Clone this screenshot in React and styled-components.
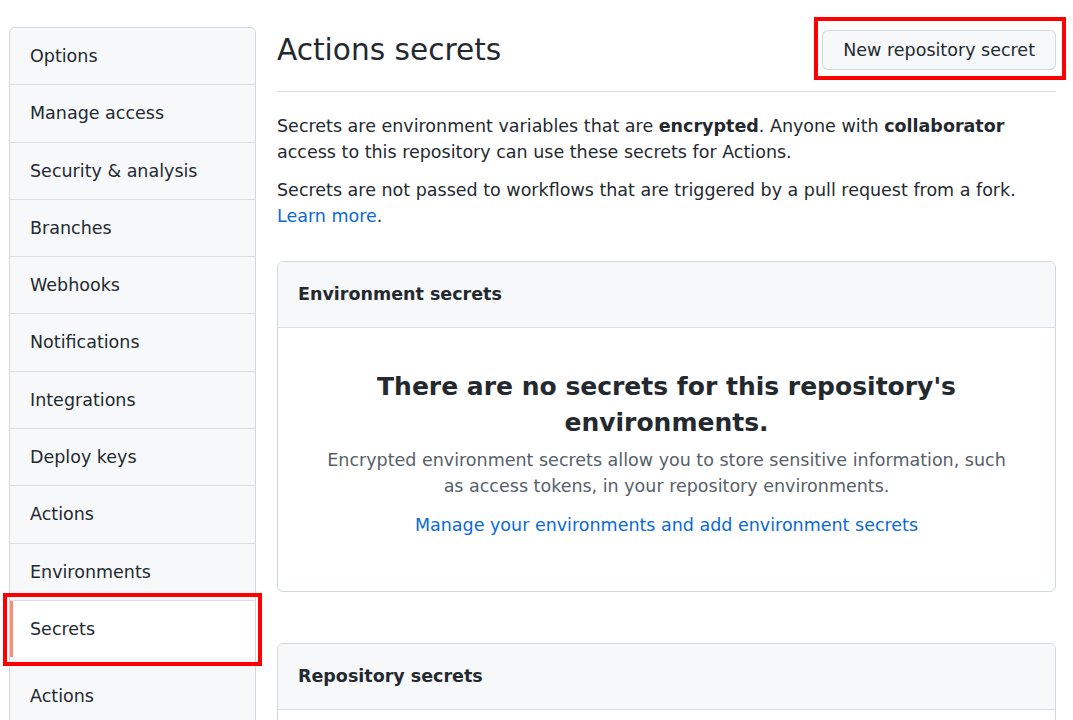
import React from 'react';
import styled, { createGlobalStyle } from 'styled-components';

const GlobalStyle = createGlobalStyle`
  html, body {
    margin: 0;
    padding: 0;
    background: #ffffff;
  }
  body {
    font-family: "DejaVu Sans", "Liberation Sans", sans-serif;
    color: #24292f;
    font-size: 17.5px;
  }
`;

const Page = styled.div`
  position: relative;
  display: flex;
  align-items: flex-start;
  gap: 21px;
  padding: 27px 17px 0 9px;
  height: 693px;
  overflow: hidden;
`;

const Sidebar = styled.nav`
  flex: 0 0 247px;
  box-sizing: border-box;
  background: #f6f8fa;
  border: 1px solid #d0d7de;
  border-radius: 6px;
  overflow: hidden;
`;

const MenuItem = styled.div`
  position: relative;
  padding: ${p => (p.$sub ? '27px 20px 16px' : '16px 20px')};
  line-height: 24.3px;
  font-size: 17.5px;
  color: #24292f;
  background: ${p => (p.$selected ? '#ffffff' : 'transparent')};
  border-top: ${p => (p.$first || p.$sub ? 'none' : '1px solid #d8dee4')};

  ${p =>
    p.$selected &&
    `
    &::before {
      content: '';
      position: absolute;
      left: 0;
      top: 0;
      bottom: 0;
      width: 3px;
      background: #fd8c73;
    }
  `}
`;

const Main = styled.main`
  flex: 1;
  min-width: 0;
`;

const Subhead = styled.div`
  display: flex;
  align-items: center;
  justify-content: space-between;
  padding: 3px 0 21px;
  border-bottom: 1px solid #d8dee4;
`;

const Title = styled.h2`
  margin: 0;
  font-size: 29.6px;
  font-weight: 400;
  line-height: 40px;
  color: #24292f;
`;

const Button = styled.button`
  height: 40px;
  padding: 0 20px;
  font-family: inherit;
  font-size: 17.5px;
  color: #24292f;
  background: #f6f8fa;
  border: 1px solid rgba(27, 31, 36, 0.15);
  border-radius: 6px;
  cursor: pointer;
`;

const Para = styled.p`
  margin: ${p => (p.$first ? '21px' : '12px')} 0 0;
  line-height: 26px;
  font-size: 17.5px;
`;

const Link = styled.a`
  color: #0969da;
  text-decoration: none;
`;

const Box = styled.section`
  margin-top: ${p => p.$top}px;
  border: 1px solid #d0d7de;
  border-radius: 6px;
  overflow: hidden;
`;

const BoxHeader = styled.div`
  padding: 20px 20px 21px;
  line-height: 24px;
  font-weight: 700;
  background: #f6f8fa;
  border-bottom: 1px solid #d8dee4;
`;

const Blankslate = styled.div`
  padding: 41px 40px 53px;
  text-align: center;
`;

const BlankTitle = styled.h3`
  margin: 0;
  font-size: 25px;
  font-weight: 700;
  line-height: 36px;
`;

const BlankText = styled.p`
  margin: 6px 0 0;
  line-height: 26px;
  color: #57606a;
`;

const BlankLink = styled.p`
  margin: 13px 0 0;
  line-height: 26px;
`;

const Highlight = styled.div`
  position: absolute;
  box-sizing: border-box;
  border: 4px solid #ff0000;
  pointer-events: none;
`;

const menu = [
  'Options',
  'Manage access',
  'Security & analysis',
  'Branches',
  'Webhooks',
  'Notifications',
  'Integrations',
  'Deploy keys',
  'Actions',
  'Environments',
  'Secrets',
];

const App = () => {
  return (
    <>
      <GlobalStyle />
      <Page>
        <Sidebar>
          {menu.map((label, i) => (
            <MenuItem key={i} $first={i === 0} $selected={label === 'Secrets'}>
              {label}
            </MenuItem>
          ))}
          <MenuItem $sub>Actions</MenuItem>
          <MenuItem $sub>Dependabot</MenuItem>
        </Sidebar>
        <Main>
          <Subhead>
            <Title>Actions secrets</Title>
            <Button>New repository secret</Button>
          </Subhead>
          <Para $first>
            Secrets are environment variables that are <b>encrypted</b>. Anyone with{' '}
            <b>collaborator</b> access to this repository can use these secrets for Actions.
          </Para>
          <Para>
            Secrets are not passed to workflows that are triggered by a pull request from a fork.{' '}
            <Link href="#">Learn more</Link>.
          </Para>

          <Box $top={32}>
            <BoxHeader>Environment secrets</BoxHeader>
            <Blankslate>
              <BlankTitle>There are no secrets for this repository's environments.</BlankTitle>
              <BlankText>
                Encrypted environment secrets allow you to store sensitive information, such as
                access tokens, in your repository environments.
              </BlankText>
              <BlankLink>
                <Link href="#">Manage your environments and add environment secrets</Link>
              </BlankLink>
            </Blankslate>
          </Box>

          <Box $top={51}>
            <BoxHeader>Repository secrets</BoxHeader>
            <Blankslate>
              <BlankTitle>There are no secrets for this repository.</BlankTitle>
            </Blankslate>
          </Box>
        </Main>

        <Highlight style={{ left: 814, top: 17, width: 252, height: 63 }} />
        <Highlight style={{ left: 3, top: 593, width: 259, height: 73 }} />
      </Page>
    </>
  );
};

export default App;
